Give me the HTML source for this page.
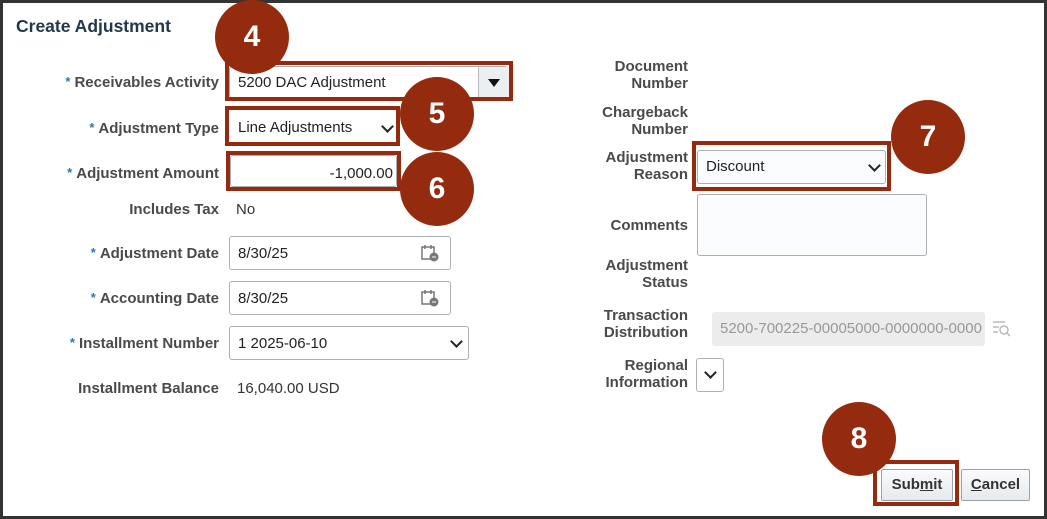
<!DOCTYPE html>
<html><head><style>
body{margin:0;width:1047px;height:519px;overflow:hidden;background:#fff;font-family:"Liberation Sans",Arial,sans-serif;}
.frame{position:absolute;left:0;top:0;width:1041px;height:513px;border:3px solid #333;}
.a{position:absolute;}
.lbl{position:absolute;font-size:15px;font-weight:bold;color:#4a4a4a;text-align:right;}
.star{color:#2a78b8;font-size:13px;vertical-align:top;margin-right:4px;}
.inp{position:absolute;border:1px solid #aab0b5;border-radius:3px;background:#fff;font-size:15px;color:#222;box-sizing:border-box;padding-left:8px;}
.red{position:absolute;border:4px solid #952b0e;box-sizing:border-box;}
.circ{position:absolute;width:74px;height:74px;border-radius:50%;background:#952b0e;color:#fff;font-weight:bold;font-size:30px;text-align:center;line-height:74px;}
.chev{position:absolute;width:7px;height:7px;border-right:2px solid #222;border-bottom:2px solid #222;transform:rotate(45deg);}
.val{position:absolute;font-size:15px;color:#333;}
.btn{position:absolute;border:1px solid #9aa3ab;border-radius:2px;background:linear-gradient(#fafbfc,#e6eaee);font-size:15px;font-weight:bold;color:#333;text-align:center;box-sizing:border-box;}
</style></head><body>
<div class="frame"></div>
<div class="a" style="left:16px;top:16px;font-size:17.5px;font-weight:bold;color:#23374d">Create Adjustment</div>

<div class="lbl" style="right:828px;top:74px"><span class="star">*</span>Receivables Activity</div>
<div class="inp" style="left:229px;top:66px;width:279px;height:32px;line-height:31px;">5200 DAC Adjustment</div>
<div class="a" style="left:478px;top:67px;width:30px;height:30px;background:#eceff1;border-left:1px solid #bbb"></div>
<div class="a" style="left:488px;top:79px;width:0;height:0;border-left:6px solid transparent;border-right:6px solid transparent;border-top:8px solid #111"></div>

<div class="lbl" style="right:828px;top:120px"><span class="star">*</span>Adjustment Type</div>
<div class="inp" style="left:229px;top:111px;width:167px;height:32px;line-height:31px;border-color:#fff">Line Adjustments</div>
<div class="chev" style="left:383px;top:122px"></div>

<div class="lbl" style="right:828px;top:165px"><span class="star">*</span>Adjustment Amount</div>
<div class="inp" style="left:230px;top:155px;width:167px;height:32px;line-height:36px;text-align:right;padding-right:3px">-1,000.00</div>

<div class="lbl" style="right:828px;top:201px">Includes Tax</div>
<div class="val" style="left:236px;top:201px">No</div>

<div class="lbl" style="right:828px;top:245px"><span class="star">*</span>Adjustment Date</div>
<div class="inp" style="left:229px;top:236px;width:222px;height:34px;line-height:33px">8/30/25</div>
<div class="lbl" style="right:828px;top:290px"><span class="star">*</span>Accounting Date</div>
<div class="inp" style="left:229px;top:281px;width:222px;height:34px;line-height:33px">8/30/25</div>
<svg class="a" style="left:420px;top:243px" width="20" height="20" viewBox="0 0 20 20"><rect x="2" y="4" width="12" height="12" fill="none" stroke="#777" stroke-width="1.5"/><line x1="5" y1="2" x2="5" y2="6" stroke="#777" stroke-width="1.5"/><line x1="11" y1="2" x2="11" y2="6" stroke="#777" stroke-width="1.5"/><circle cx="14" cy="14" r="4.5" fill="#777"/><line x1="12" y1="14" x2="16" y2="14" stroke="#fff"/></svg>
<svg class="a" style="left:420px;top:288px" width="20" height="20" viewBox="0 0 20 20"><rect x="2" y="4" width="12" height="12" fill="none" stroke="#777" stroke-width="1.5"/><line x1="5" y1="2" x2="5" y2="6" stroke="#777" stroke-width="1.5"/><line x1="11" y1="2" x2="11" y2="6" stroke="#777" stroke-width="1.5"/><circle cx="14" cy="14" r="4.5" fill="#777"/><line x1="12" y1="14" x2="16" y2="14" stroke="#fff"/></svg>

<div class="lbl" style="right:828px;top:335px"><span class="star">*</span>Installment Number</div>
<div class="inp" style="left:229px;top:326px;width:240px;height:34px;line-height:33px">1 2025-06-10</div>
<div class="chev" style="left:452px;top:337px"></div>

<div class="lbl" style="right:828px;top:380px">Installment Balance</div>
<div class="val" style="left:237px;top:380px">16,040.00 USD</div>

<!-- right column -->
<div class="lbl" style="right:359px;top:58px;line-height:17px">Document<br>Number</div>
<div class="lbl" style="right:359px;top:104px;line-height:17px">Chargeback<br>Number</div>
<div class="lbl" style="right:359px;top:149px;line-height:17px">Adjustment<br>Reason</div>
<div class="inp" style="left:697px;top:150px;width:189px;height:34px;line-height:32px;background:#fbfcfd">Discount</div>
<div class="chev" style="left:870px;top:161px"></div>
<div class="lbl" style="right:359px;top:217px">Comments</div>
<div class="inp" style="left:697px;top:194px;width:230px;height:62px;background:#fbfcfd"></div>
<div class="lbl" style="right:359px;top:257px;line-height:17px">Adjustment<br>Status</div>
<div class="lbl" style="right:359px;top:307px;line-height:17px">Transaction<br>Distribution</div>
<div class="a" style="left:712px;top:312px;width:273px;height:34px;background:#ececec;border-radius:3px;font-size:15px;color:#999;line-height:34px;padding-left:8px;box-sizing:border-box;overflow:hidden;white-space:nowrap">5200-700225-00005000-0000000-0000</div>
<svg class="a" style="left:991px;top:318px" width="22" height="22" viewBox="0 0 22 22" fill="none" stroke="#bbb" stroke-width="1.5"><line x1="2" y1="4" x2="14" y2="4"/><line x1="2" y1="9" x2="8" y2="9"/><line x1="2" y1="14" x2="7" y2="14"/><circle cx="13" cy="12" r="4"/><line x1="16" y1="15" x2="19" y2="18"/></svg>
<div class="lbl" style="right:359px;top:357px;line-height:17px">Regional<br>Information</div>
<div class="inp" style="left:696px;top:358px;width:28px;height:34px"></div>
<div class="chev" style="left:706px;top:368px"></div>

<div class="btn" style="left:881px;top:469px;width:72px;height:32px;line-height:30px">Sub<u>m</u>it</div>
<div class="btn" style="left:961px;top:469px;width:69px;height:32px;line-height:30px"><u>C</u>ancel</div>

<!-- annotations -->
<div class="red" style="left:225px;top:61px;width:288px;height:40px"></div>
<div class="red" style="left:225px;top:106px;width:175px;height:40px"></div>
<div class="red" style="left:226px;top:151px;width:175px;height:40px"></div>
<div class="red" style="left:692px;top:141px;width:199px;height:50px"></div>
<div class="red" style="left:873px;top:460px;width:86px;height:46px"></div>
<div class="circ" style="left:215px;top:0px">4</div>
<div class="circ" style="left:400px;top:77px">5</div>
<div class="circ" style="left:400px;top:152px">6</div>
<div class="circ" style="left:891px;top:100px">7</div>
<div class="circ" style="left:822px;top:402px">8</div>
</body></html>
